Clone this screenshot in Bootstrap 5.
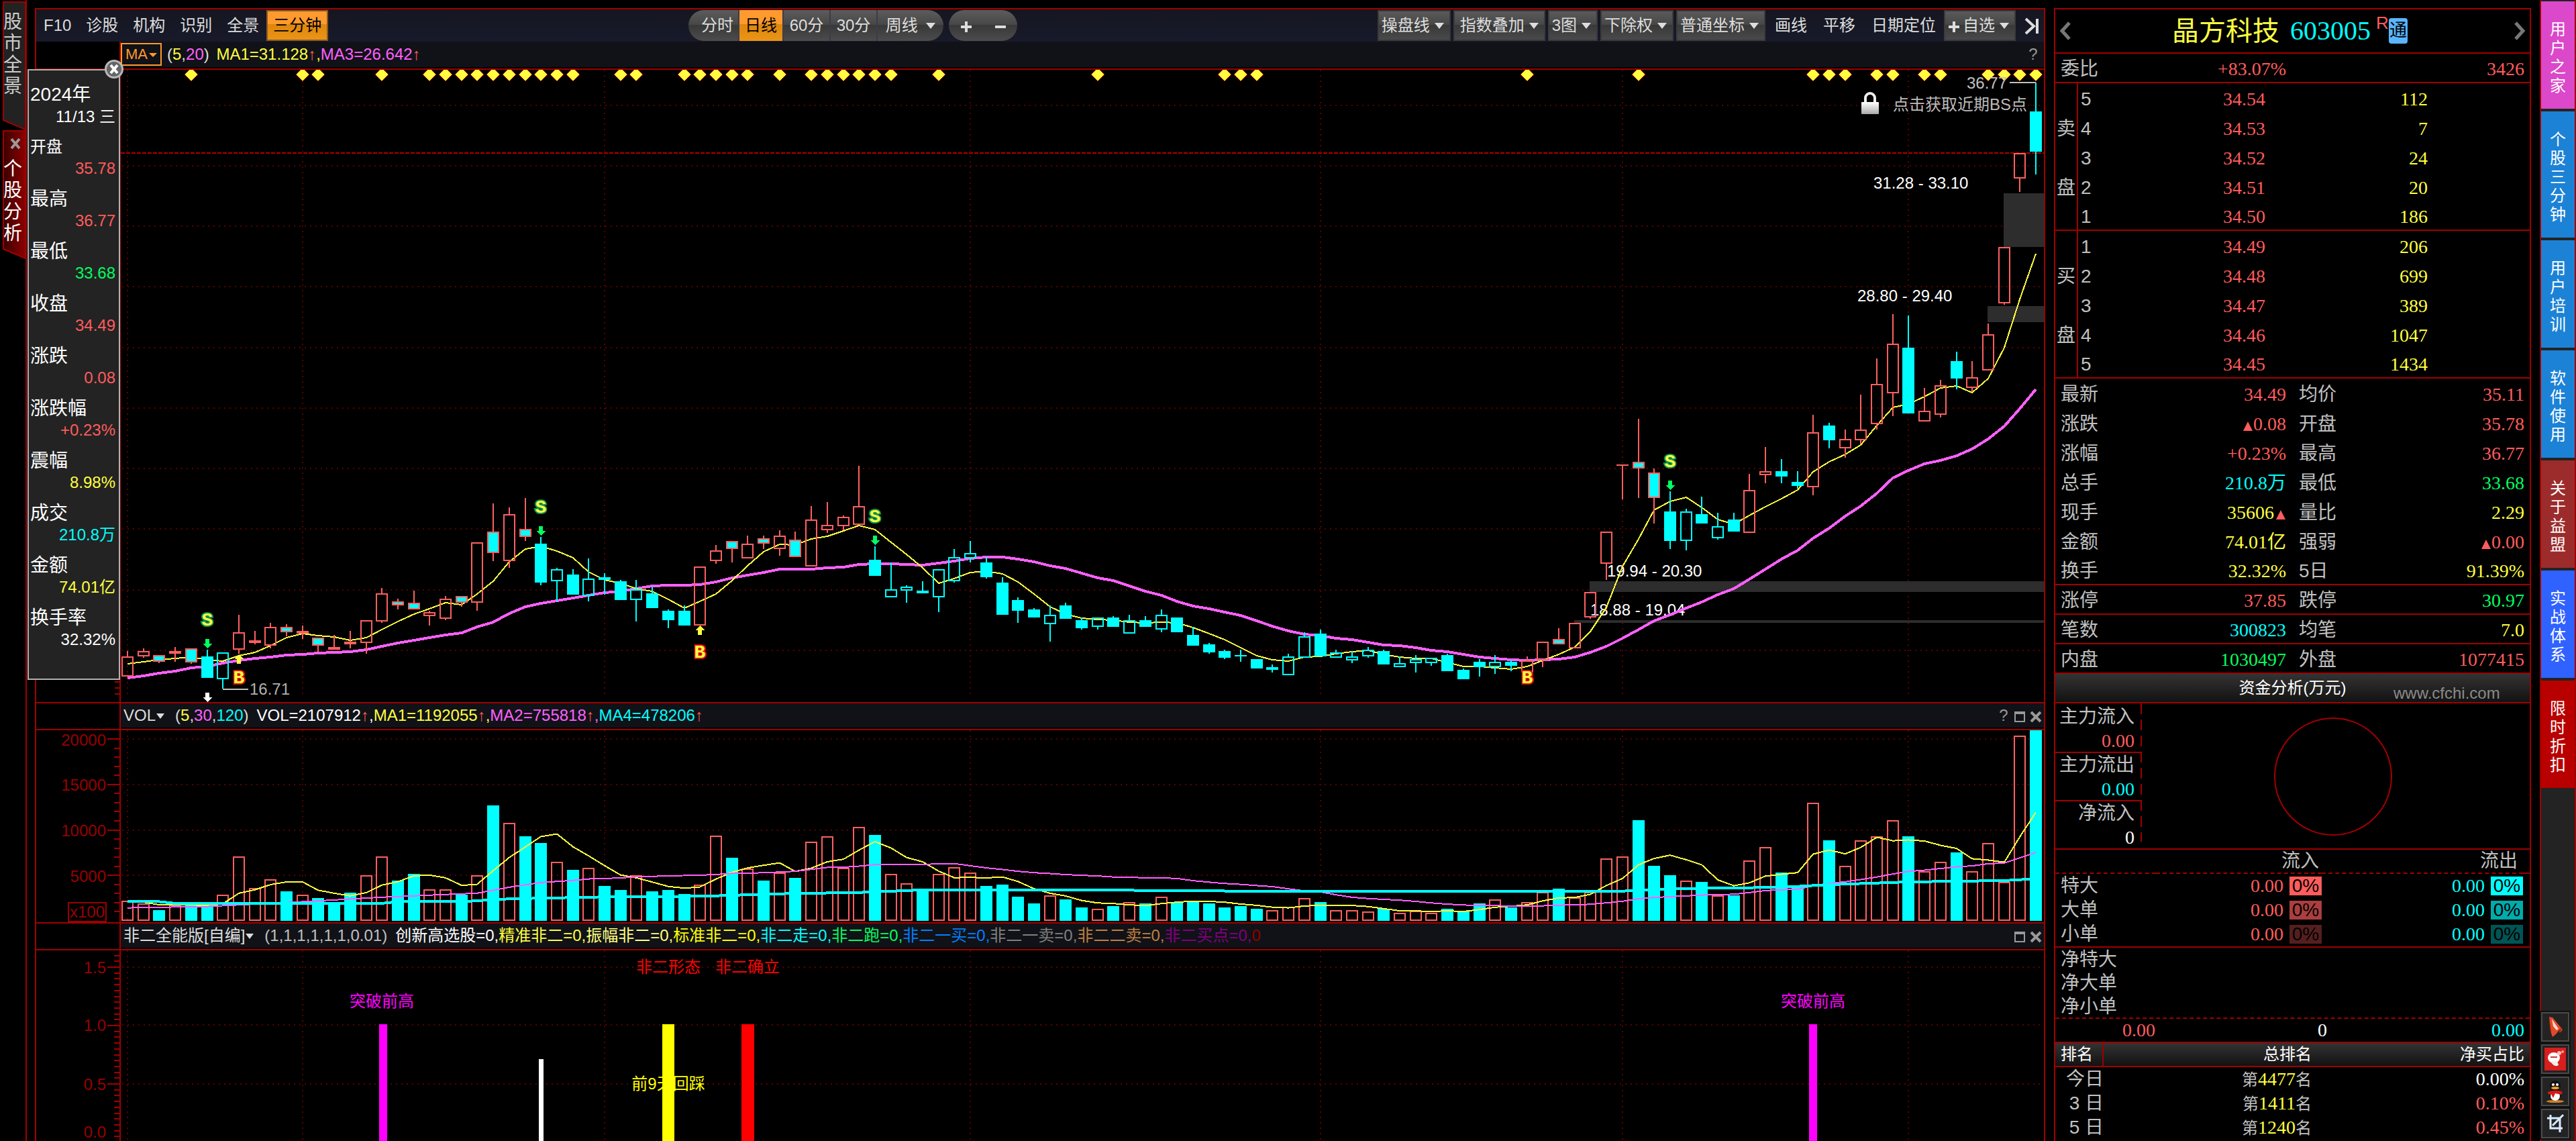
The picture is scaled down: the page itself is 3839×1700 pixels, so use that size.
<!DOCTYPE html>
<html lang="zh-CN">
<head>
<meta charset="utf-8">
<meta name="viewport" content="width=device-width, initial-scale=1">
<title>晶方科技 603005</title>
<link rel="stylesheet" href="https://cdn.jsdelivr.net/npm/bootstrap@5.3.0/dist/css/bootstrap.min.css">
<style>
:root{--ln:#a00000;--up:#ff5c5c;--dn:#00ff60;--cy:#00ffff;--ye:#ffff40;--mg:#ff60ff;--lb:#c0c0c0;}
body{background:#000;color:#ddd;font-family:"Liberation Sans","Noto Sans CJK SC",sans-serif;font-size:24px;line-height:28px;overflow:hidden}
button,a{font:inherit;color:inherit}
.app{height:100vh}
.c-up{color:var(--up)}.c-dn{color:var(--dn)}.c-cy{color:var(--cy)}.c-ye{color:var(--ye)}.c-mg{color:var(--mg)}.c-wh{color:#fff}
/* left tabs */
.side-left{flex:0 0 40px;border-right:2px solid var(--ln);padding:2px 0 0 4px}
.side-tab{display:flex;flex-direction:column;align-items:flex-start;justify-content:flex-start;position:relative;height:192px;border:0;background:none;padding:15px 0 0;width:34px;font-size:28px;line-height:32px;color:#ccc}
.side-tab svg{position:absolute;left:0;top:0}
.side-tab span{position:relative;display:block;width:28px;height:32px;margin-left:1px}
.side-tab .close-room{height:27px}
.side-tab.on{color:#fff}
/* chart frame */
.frame{margin:12px 0 0 12px;border:2px solid var(--ln);border-bottom:0;min-width:0}
.tool-row{height:48px;background:linear-gradient(#15161f,#181a2b)}
.tool-left{flex:0 0 972px}
.tool-link{background:none;border:0;padding:0 11px;white-space:nowrap}
.tool-right .tool-link{padding:0 12px}
.hot{background:linear-gradient(#ff9a2e 0,#ff9a2e 45%,#de860b 45%,#ea9418);color:#000;border:2px solid #8a5a20;height:46px;padding:0 8px;white-space:nowrap}
.pill{height:46px;background:linear-gradient(#5c5c5c,#474747 48%,#383838 48%,#4c4c4c);border-radius:23px;overflow:hidden}
.pill button{background:none;border:0;border-right:2px solid #3c3c48;padding:0;width:70px;white-space:nowrap}
.pill button:first-child{width:76px;padding-left:12px}
.pill button:last-child{border:0;width:98px}
.pill .hot{background:linear-gradient(#ff9a2e 0,#ff9a2e 45%,#de860b 45%,#ea9418);height:46px;width:66px}
.pill.zoomer{width:102px}
.pill.zoomer button{width:51px;border:0;padding:0 4px}
.drop{height:46px;border:2px solid #3a3a3c;background:linear-gradient(#5a5a5a,#474747 48%,#383838 48%,#4a4a4a);padding:0 8px 0 4px;white-space:nowrap}
.drop-set{margin-right:2px}
.caret{display:inline-block;border:7px solid transparent;border-top:9px solid #ddd;border-bottom:0;vertical-align:3px;margin-left:6px}
.drop .caret{margin-left:7px}
.gut{flex:0 0 126px;border-right:2px solid var(--ln)}
.pane-head{height:42px;border-bottom:2px solid var(--ln)}
.pane-head.mid{border-top:2px solid var(--ln)}
.head-bar{background:#111217;white-space:pre;border-bottom:2px solid #000;min-width:0;overflow:hidden}
.ma-btn{height:34px;border:2px solid #ff9a2e;background:none;color:#ff9a2e;font-size:22px;padding:0 5px;line-height:28px}
.ma-btn .caret{border-width:6px;border-top:6px solid #ff9a2e;border-bottom:0;margin-left:2px}
.head-btn{border:0;background:none;padding:0}
.head-btn .caret{margin-left:1px;border-width:6px;border-top-width:8px;border-bottom:0}
.win-btn{border:0;background:none;padding:0;color:#999;width:24px;line-height:24px}
.plot{display:block;width:100%}
.plot text{font-size:24px;dominant-baseline:central}
/* day card */
.day-card{left:-13px;top:89px;width:138px;height:910px;background:#232323;border:2px solid #b0b0b0;color:#fff;padding:22px 5px 0 2px}
.day-card .yr{font-size:28px;line-height:28px}
.day-card .dt{line-height:38px;margin-bottom:8px;text-align:right}
.day-card dl{margin:0}
.day-card dt{font-weight:400;font-size:28px;line-height:36px}
.day-card dt:first-child{font-size:24px}
.day-card dd{text-align:right;line-height:28px;margin:0 0 14px}
.day-close{position:absolute;right:-8px;top:-17px;width:30px;height:30px;border:0;padding:0;background:none;line-height:0}
/* quote panel */
.quote{flex:0 0 711px;margin:12px 13px 0;border:2px solid var(--ln);border-bottom:0;color:var(--lb);font-size:28px}
.quote table{width:100%;table-layout:fixed;border-collapse:separate;border-spacing:0}
.quote td,.quote th{padding:4px 0 0;font-weight:400;line-height:40px;height:44px;white-space:nowrap}
.quote .n{font-family:"Liberation Serif","Noto Sans CJK SC",serif;text-align:right}
.q-title{height:66px;border-bottom:2px solid var(--ln)}
.q-title .nm{font-size:40px;color:var(--ye)}
.q-title .code{font-size:40px;color:var(--cy);font-family:"Liberation Serif",serif}
.q-title .tong{background:#5ab4ff;color:#000;font-size:26px;width:28px;height:38px;line-height:36px;border-radius:4px;text-align:center}
.nav-arrow{background:none;border:0;padding:0 6px;line-height:0}
.quote .wb>*{border-bottom:2px solid var(--ln);line-height:38px}
.book .sd{border-right:2px solid var(--ln);text-align:center}
.quote .book tr:last-child>*{border-bottom:2px solid var(--ln);line-height:38px}
.quote .book td:nth-child(2){padding-left:4px}
.quote .facts th{padding-left:8px;text-align:left}
.quote .facts td+th{padding-left:19px}
.quote .facts td:last-child{padding-right:8px}
.quote .facts .rule>*{border-bottom:2px solid var(--ln);line-height:38px}
.facts svg{vertical-align:-1px}
.bar-head{background:linear-gradient(#333,#121212);color:#fff;font-size:24px;border-bottom:2px solid var(--ln)}
.fund-head{height:44px;line-height:42px;text-align:center;position:relative}
.wmark{position:absolute;left:504px;top:8px;color:#8a8a8a;font-family:"Liberation Sans",sans-serif}
.fund{height:218px;border-bottom:2px solid var(--ln)}
.fund-l{flex:0 0 129px;text-align:right;line-height:36px;background:repeating-linear-gradient(var(--ln) 0 16px,transparent 16px 24px) right top/2px 206px no-repeat}
.fund-l div{height:72px;padding-right:9px;border-bottom:2px solid var(--ln);margin-right:2px}
.fund-l div:first-child{height:74px;padding-top:2px}
.fund-l div:last-child{border:0}
.quote .flow td,.quote .flow th,.quote .rank td{height:36px;line-height:34px;padding-top:0}
.quote .flow thead>tr>th{border-bottom:2px dashed var(--ln)}
.quote .flow th:first-child{padding-left:8px;text-align:left}
.flow .pc{display:inline-block;width:48px;height:28px;line-height:28px;text-align:center;font-family:"Liberation Sans",sans-serif;color:#000;margin:3px 0 0 9px;vertical-align:top}
.nets{height:108px;line-height:36px;padding-left:8px;border-top:2px solid var(--ln);border-bottom:2px dashed var(--ln)}
.nets div{height:35px}
.sums{height:36px;line-height:34px;border-bottom:2px solid var(--ln)}
.quote .rank th{height:36px;line-height:32px;padding-top:0;background:linear-gradient(#333,#121212);color:#fff;font-size:24px;border-bottom:2px solid var(--ln)}
.rank small{font-size:24px;color:var(--lb)}
/* right tabs */
.side-right{flex:0 0 54px;border-left:2px solid var(--ln);border-right:2px solid var(--ln);background:#232323;padding-top:2px}
.r-tab{box-sizing:border-box;height:160px;margin-bottom:4px;color:#fff;text-decoration:none;font-size:24px;line-height:28px;width:50px;text-align:center;padding:28px 13px 0}
.r-tab:hover{color:#fff}
.r-tab.tall{height:188px}
.icon-btn{width:42px;height:44px;margin-bottom:4px;border:2px solid #4a4a4a;outline:2px solid #111;background:#232323;padding:0;line-height:0}
</style>
<script src="https://cdn.jsdelivr.net/npm/bootstrap@5.3.0/dist/js/bootstrap.bundle.min.js"></script>
</head>
<body>
<div class="app d-flex">
  <nav class="side-left">
    <button class="side-tab"><svg width="34" height="192"><path d="M1 1H34V191L1 177Z" fill="#222" stroke="#a00000" stroke-width="2"/></svg><span>股</span><span>市</span><span>全</span><span>景</span></button>
    <button class="side-tab on"><svg width="34" height="192"><defs><linearGradient id="gr" x1="0" x2="1"><stop offset="0" stop-color="#3c0000"/><stop offset="1" stop-color="#8c0000"/></linearGradient></defs><path d="M1 1H34V191L1 177Z" fill="url(#gr)" stroke="#a00000" stroke-width="2"/><path d="M13 13l12 14M25 13L13 27" stroke="#999" stroke-width="4"/></svg><span class="close-room"></span><span>个</span><span>股</span><span>分</span><span>析</span></button>
  </nav>

  <main class="frame flex-grow-1 d-flex flex-column position-relative">
    <div class="tool-row d-flex align-items-center flex-shrink-0">
      <div class="tool-left d-flex align-items-center">
        <button class="tool-link">F10</button><button class="tool-link">诊股</button><button class="tool-link">机构</button><button class="tool-link">识别</button><button class="tool-link">全景</button><button class="hot">三分钟</button>
      </div>
      <div class="pill d-flex"><button>分时</button><button class="hot">日线</button><button>60分</button><button>30分</button><button>周线 <i class="caret"></i></button></div>
      <div class="pill zoomer d-flex ms-2"><button aria-label="放大"><svg width="18" height="18"><path d="M9 1V17M1 9H17" stroke="#ddd" stroke-width="4"/></svg></button><button aria-label="缩小"><svg width="18" height="18"><path d="M1 9H17" stroke="#ddd" stroke-width="4"/></svg></button></div>
      <div class="tool-right ms-auto d-flex align-items-center">
        <div class="drop-set d-flex gap-1">
          <button class="drop">操盘线<i class="caret"></i></button>
          <button class="drop ps-2">指数叠加<i class="caret"></i></button>
          <button class="drop">3图<i class="caret"></i></button>
          <button class="drop">下除权<i class="caret"></i></button>
          <button class="drop">普通坐标<i class="caret"></i></button>
        </div>
        <button class="tool-link">画线</button><button class="tool-link">平移</button><button class="tool-link">日期定位</button>
        <button class="drop"><svg width="18" height="18" class="me-1"><path d="M9 1V17M1 9H17" stroke="#ddd" stroke-width="4"/></svg>自选<i class="caret"></i></button>
        <button class="tool-link pe-1" aria-label="折叠"><svg width="26" height="26"><path d="M3 2L15 13L3 24" fill="none" stroke="#ddd" stroke-width="4"/><path d="M20 2V24" stroke="#ddd" stroke-width="4"/></svg></button>
      </div>
    </div>
    <div class="pane-head d-flex flex-shrink-0">
      <div class="gut"></div>
      <div class="head-bar flex-grow-1 d-flex align-items-center"><button class="ma-btn">MA<i class="caret"></i></button><span class="ps-2">(<span class="c-ye">5</span>,<span class="c-mg">20</span>) </span><span class="c-ye ps-1">MA1=31.128<span class="c-up">↑</span>,</span><span class="c-mg">MA3=26.642<span class="c-up">↑</span></span><button class="win-btn ms-auto me-1">?</button></div>
    </div>
    <svg class="plot flex-shrink-0" id="kline" height="942"></svg>
    <div class="pane-head mid d-flex flex-shrink-0">
      <div class="gut"></div>
      <div class="head-bar flex-grow-1 d-flex align-items-center"><button class="head-btn ps-1">VOL<i class="caret"></i></button><span class="ps-3">(<span class="c-ye">5</span>,<span class="c-mg">30</span>,<span class="c-cy">120</span>)</span><span class="c-wh ps-2 ms-1">VOL=2107912<span class="c-up">↑</span>,</span><span class="c-ye">MA1=1192055<span class="c-up">↑</span>,</span><span class="c-mg">MA2=755818<span class="c-up">↑</span>,</span><span class="c-cy">MA4=478206<span class="c-up">↑</span></span>
      <span class="ms-auto d-flex"><button class="win-btn">?</button><button class="win-btn" aria-label="最大化"><svg width="18" height="18"><path d="M2 2H16V16H2Z" fill="none" stroke="#999" stroke-width="2"/><path d="M1 3H17" stroke="#999" stroke-width="4"/></svg></button><button class="win-btn" aria-label="关闭"><svg width="18" height="18"><path d="M2 2L16 16M16 2L2 16" stroke="#999" stroke-width="4"/></svg></button></span></div>
    </div>
    <svg class="plot flex-shrink-0" id="volume" height="286"></svg>
    <div class="pane-head mid d-flex flex-shrink-0">
      <div class="gut"></div>
      <div class="head-bar flex-grow-1 d-flex align-items-center"><button class="head-btn ps-1">非二全能版[自编]<i class="caret"></i></button><span class="ps-3" style="color:var(--lb)">(1,1,1,1,1,1,0.01)</span><span class="c-wh ps-2 ms-1">创新高选股=0,</span><span class="c-ye">精准非二=0,</span><span style="color:#ffff80">振幅非二=0,</span><span style="color:#ff0">标准非二=0,</span><span class="c-cy">非二走=0,</span><span class="c-dn">非二跑=0,</span><span style="color:#0080ff">非二一买=0,</span><span style="color:#808080">非二一卖=0,</span><span style="color:#c08040">非二二卖=0,</span><span style="color:#800080">非二买点=0,</span><span style="color:#900000">0</span>
      <span class="ms-auto d-flex"><button class="win-btn" aria-label="最大化"><svg width="18" height="18"><path d="M2 2H16V16H2Z" fill="none" stroke="#999" stroke-width="2"/><path d="M1 3H17" stroke="#999" stroke-width="4"/></svg></button><button class="win-btn" aria-label="关闭"><svg width="18" height="18"><path d="M2 2L16 16M16 2L2 16" stroke="#999" stroke-width="4"/></svg></button></span></div>
    </div>
    <svg class="plot flex-shrink-0" id="signal" height="284"></svg>

    <aside class="day-card position-absolute">
      <button class="day-close" aria-label="关闭"><svg width="30" height="30"><circle cx="15" cy="15" r="12.5" fill="#666" stroke="#b8b8b8" stroke-width="3"/><path d="M10 9L20 21M20 9L10 21" stroke="#fff" stroke-width="4"/></svg></button>
      <div class="yr">2024年</div><div class="dt">11/13 三</div>
      <dl>
        <dt>开盘</dt><dd class="c-up">35.78</dd>
        <dt>最高</dt><dd class="c-up">36.77</dd>
        <dt>最低</dt><dd class="c-dn">33.68</dd>
        <dt>收盘</dt><dd class="c-up">34.49</dd>
        <dt>涨跌</dt><dd class="c-up">0.08</dd>
        <dt>涨跌幅</dt><dd class="c-up">+0.23%</dd>
        <dt>震幅</dt><dd class="c-ye">8.98%</dd>
        <dt>成交</dt><dd class="c-cy">210.8万</dd>
        <dt>金额</dt><dd class="c-ye">74.01亿</dd>
        <dt>换手率</dt><dd>32.32%</dd>
      </dl>
    </aside>
  </main>

  <section class="quote">
    <div class="q-title d-flex align-items-center justify-content-between">
      <button class="nav-arrow" aria-label="上一只"><svg width="20" height="28"><path d="M15 2L4 14L15 26" fill="none" stroke="#777" stroke-width="5"/></svg></button>
      <div class="d-flex align-items-center pe-2"><span class="nm">晶方科技</span><span class="code ms-3">603005</span><span class="c-up ms-2 pb-4" style="font-size:26px">R</span><span class="tong">通</span></div>
      <button class="nav-arrow" aria-label="下一只"><svg width="20" height="28"><path d="M5 2L16 14L5 26" fill="none" stroke="#777" stroke-width="5"/></svg></button>
    </div>
    <table><colgroup><col style="width:150px"><col style="width:194px"><col></colgroup>
      <tr class="wb"><td class="ps-2">委比</td><td class="n c-up">+83.07%</td><td class="n c-up pe-2">3426</td></tr></table>
    <table class="book"><colgroup><col style="width:34px"><col style="width:98px"><col style="width:181px"><col style="width:242px"><col></colgroup>
      <tbody>
      <tr><th class="sd"></th><td>5</td><td class="n c-up">34.54</td><td class="n c-ye">112</td><td></td></tr>
      <tr><th class="sd">卖</th><td>4</td><td class="n c-up">34.53</td><td class="n c-ye">7</td><td></td></tr>
      <tr><th class="sd"></th><td>3</td><td class="n c-up">34.52</td><td class="n c-ye">24</td><td></td></tr>
      <tr><th class="sd">盘</th><td>2</td><td class="n c-up">34.51</td><td class="n c-ye">20</td><td></td></tr>
      <tr><th class="sd"></th><td>1</td><td class="n c-up">34.50</td><td class="n c-ye">186</td><td></td></tr>
      </tbody><tbody>
      <tr><th class="sd"></th><td>1</td><td class="n c-up">34.49</td><td class="n c-ye">206</td><td></td></tr>
      <tr><th class="sd">买</th><td>2</td><td class="n c-up">34.48</td><td class="n c-ye">699</td><td></td></tr>
      <tr><th class="sd"></th><td>3</td><td class="n c-up">34.47</td><td class="n c-ye">389</td><td></td></tr>
      <tr><th class="sd">盘</th><td>4</td><td class="n c-up">34.46</td><td class="n c-ye">1047</td><td></td></tr>
      <tr><th class="sd"></th><td>5</td><td class="n c-up">34.45</td><td class="n c-ye">1434</td><td></td></tr>
      </tbody></table>
    <table class="facts"><colgroup><col style="width:150px"><col style="width:194px"><col style="width:150px"><col></colgroup>
      <tr><th>最新</th><td class="n c-up">34.49</td><th>均价</th><td class="n c-up">35.11</td></tr>
      <tr><th>涨跌</th><td class="n c-up"><svg width="16" height="14"><path d="M1 14L8 0L15 14Z" fill="#ff5c5c"/></svg>0.08</td><th>开盘</th><td class="n c-up">35.78</td></tr>
      <tr><th>涨幅</th><td class="n c-up">+0.23%</td><th>最高</th><td class="n c-up">36.77</td></tr>
      <tr><th>总手</th><td class="n c-cy">210.8万</td><th>最低</th><td class="n c-dn">33.68</td></tr>
      <tr><th>现手</th><td class="n c-ye">35606<svg width="18" height="14"><path d="M3 14L10 0L17 14Z" fill="#ff5c5c"/></svg></td><th>量比</th><td class="n c-ye">2.29</td></tr>
      <tr><th>金额</th><td class="n c-ye">74.01亿</td><th>强弱</th><td class="n c-up"><svg width="16" height="14"><path d="M1 14L8 0L15 14Z" fill="#ff5c5c"/></svg>0.00</td></tr>
      <tr class="rule"><th>换手</th><td class="n c-ye">32.32%</td><th>5日</th><td class="n c-ye">91.39%</td></tr>
      <tr class="rule"><th>涨停</th><td class="n c-up">37.85</td><th>跌停</th><td class="n c-dn">30.97</td></tr>
      <tr class="rule"><th>笔数</th><td class="n c-cy">300823</td><th>均笔</th><td class="n c-ye">7.0</td></tr>
      <tr class="rule"><th>内盘</th><td class="n c-dn">1030497</td><th>外盘</th><td class="n c-up">1077415</td></tr>
    </table>
    <div class="bar-head fund-head">资金分析(万元)<span class="wmark">www.cfchi.com</span></div>
    <div class="fund d-flex">
      <div class="fund-l"><div>主力流入<br><span class="n c-up">0.00</span></div><div>主力流出<br><span class="n c-cy">0.00</span></div><div>净流入<br><span class="n c-wh">0</span></div></div>
      <div class="flex-grow-1 text-center pe-2"><svg width="176" height="176" style="margin-top:21px"><circle cx="88" cy="88" r="87" fill="none" stroke="#a00000" stroke-width="2"/></svg></div>
    </div>
    <table class="flow"><colgroup><col style="width:150px"><col style="width:247px"><col style="width:300px"><col></colgroup>
      <thead><tr><th></th><th class="text-end pe-1">流入</th><th class="text-end pe-2">流出</th><th></th></tr></thead>
      <tbody>
      <tr><th>特大</th><td class="n c-up">0.00<span class="pc" style="background:#ff5c5c">0%</span></td><td class="n c-cy">0.00<span class="pc" style="background:#00ffff">0%</span></td><td></td></tr>
      <tr><th>大单</th><td class="n c-up">0.00<span class="pc" style="background:#ab3e3e">0%</span></td><td class="n c-cy">0.00<span class="pc" style="background:#00abab">0%</span></td><td></td></tr>
      <tr><th>小单</th><td class="n c-up">0.00<span class="pc" style="background:#551f1f">0%</span></td><td class="n c-cy">0.00<span class="pc" style="background:#005555">0%</span></td><td></td></tr>
      </tbody></table>
    <div class="nets"><div>净特大</div><div>净大单</div><div>净小单</div></div>
    <div class="sums d-flex"><span class="n c-up" style="width:149px">0.00</span><span class="n c-wh" style="width:256px">0</span><span class="n c-cy ms-auto pe-2">0.00</span></div>
    <table class="rank"><colgroup><col style="width:72px"><col style="width:310px"><col></colgroup>
      <thead><tr><th class="ps-2" style="border-right:2px solid var(--ln)">排名</th><th class="text-end">总排名</th><th class="text-end pe-2">净买占比</th></tr></thead>
      <tbody>
      <tr><td class="text-end">今日</td><td class="n c-ye"><small>第</small>4477<small>名</small></td><td class="n c-wh pe-2">0.00%</td></tr>
      <tr><td class="text-end">3 日</td><td class="n c-ye"><small>第</small>1411<small>名</small></td><td class="n c-up pe-2">0.10%</td></tr>
      <tr><td class="text-end">5 日</td><td class="n c-ye"><small>第</small>1240<small>名</small></td><td class="n c-up pe-2">0.45%</td></tr>
      </tbody></table>
  </section>

  <nav class="side-right d-flex flex-column">
    <a href="#" class="r-tab" style="background:#db48ca">用户之家</a>
    <a href="#" class="r-tab tall" style="background:#1c82d6">个股三分钟</a>
    <a href="#" class="r-tab" style="background:#1c82d6">用户培训</a>
    <a href="#" class="r-tab" style="background:#1c82d6">软件使用</a>
    <a href="#" class="r-tab" style="background:#9c2c2c">关于益盟</a>
    <a href="#" class="r-tab" style="background:#2f62ff">实战体系</a>
    <a href="#" class="r-tab" style="background:#b80000">限时折扣</a>
    <div class="mt-auto d-flex flex-column">
      <button class="icon-btn" aria-label="画笔"><svg width="30" height="34" viewBox="0 0 30 34"><path d="M6 2L11 3L26 21L23 25L20 23L16 28L11 32L8 24Z" fill="#e04a2a"/><path d="M10 5L20 20L17 22L12 16Z" fill="#ffd8c8"/><path d="M6 3L10 31L7 20Z" fill="#a01a08"/><path d="M19 23L25 18L22 26Z" fill="#a02010"/></svg></button>
      <button class="icon-btn" aria-label="消息"><svg width="32" height="34" viewBox="0 0 32 34"><rect width="32" height="34" fill="#d81e1e"/><ellipse cx="14" cy="15" rx="9" ry="8" fill="#fff"/><path d="M9 20Q14 30 21 26L19 20Z" fill="#eee"/><path d="M9 14H19" stroke="#c33" stroke-width="2"/><circle cx="22" cy="8" r="3" fill="#fbb"/><circle cx="27" cy="6" r="2" fill="#f99"/></svg></button>
      <button class="icon-btn" aria-label="QQ客服"><svg width="30" height="34" viewBox="0 0 30 34"><ellipse cx="15" cy="32" rx="13" ry="2" fill="#d08020"/><ellipse cx="15" cy="22" rx="9" ry="9" fill="#111"/><ellipse cx="15" cy="24" rx="7" ry="7" fill="#fff"/><ellipse cx="15" cy="9" rx="8" ry="8" fill="#111"/><circle cx="12" cy="7" r="2" fill="#fff"/><circle cx="18" cy="7" r="2" fill="#fff"/><ellipse cx="15" cy="12" rx="6" ry="2" fill="#f0a020"/><path d="M4 18Q15 13 26 18L24 22L15 20L12 27L9 21L5 22Z" fill="#d81818"/></svg></button>
      <button class="icon-btn" aria-label="截图"><svg width="30" height="30" viewBox="0 0 30 30"><path d="M8 2V22H26M3 7H22V28M11 18L27 2" fill="none" stroke="#d8ecff" stroke-width="3"/></svg></button>
    </div>
  </nav>
</div>
<script>
/* wick top, body top, body bottom, wick bottom, style
   r hollow red, c solid cyan, h hollow cyan, m cyan with red edge, x flat red */
const K=`970 978 1008 1008 r|966 970 978 980 r|976 976 986 988 m|964 970 974 986 x|966 966 987 989 m|968 978 1010 1010 c|972 972 1012 1026 h|916 942 968 974 r|940 954 958 960 x|928 934 962 966 r|930 934 942 948 m|932 940 944 952 x|950 950 962 971 m|946 964 968 968 x|940 956 960 966 x|924 924 958 974 r|876 884 926 928 r|892 896 902 908 m|880 898 908 908 m|910 912 918 932 r|888 892 922 924 r|888 888 898 904 m|808 808 898 910 r|750 792 824 836 m|756 766 836 846 r|742 788 800 806 m|800 810 868 872 c|846 848 866 896 h|848 856 886 886 c|832 862 888 896 h|854 860 864 886 c|864 866 894 894 c|864 878 894 926 h|874 884 906 906 c|908 910 924 936 c|902 910 932 932 c|844 844 932 932 r|812 820 836 840 r|806 806 818 838 m|798 810 832 832 r|798 802 810 818 m|790 798 818 828 r|792 804 830 830 m|754 774 844 844 r|748 782 790 794 r|768 770 784 790 r|694 754 782 782 r|814 834 858 858 c|838 878 890 890 h|872 874 880 898 h|866 880 884 884 c|848 848 890 912 h|818 830 866 868 h|806 824 832 838 h|830 838 860 862 c|860 868 916 916 c|890 894 910 928 c|906 908 920 920 c|902 916 930 956 h|898 902 922 922 c|920 924 936 938 c|920 920 934 938 h|918 920 934 934 c|916 924 944 944 h|918 924 934 934 c|908 916 938 942 h|920 920 942 942 c|934 946 962 962 c|958 960 972 974 c|968 970 980 982 c|968 976 978 986 c|982 982 996 996 c|990 994 998 1002 c|974 978 1006 1006 h|942 948 980 980 h|938 944 978 978 c|968 972 980 980 h|970 978 984 988 h|964 968 978 980 h|968 970 990 990 c|978 988 994 994 h|976 982 988 1002 h|980 980 988 992 h|974 976 1000 1000 c|996 998 1012 1012 c|982 986 994 1008 c|976 986 994 1004 h|984 986 992 1000 c|978 984 1002 1002 r|956 956 984 994 r|936 952 960 960 m|928 928 966 966 r|882 882 920 922 r|792 792 840 864 r|692 692 694 744 x|624 688 698 742 m|698 704 742 780 m|732 762 806 818 c|758 762 806 820 h|740 766 780 780 c|764 784 802 804 h|764 774 792 792 c|706 730 794 794 r|666 702 708 720 r|684 702 710 720 c|702 718 724 728 c|618 644 726 738 r|630 634 656 668 c|640 654 668 682 r|588 640 656 662 r|534 572 632 640 r|468 512 586 620 r|470 518 616 616 c|578 612 628 628 r|566 574 618 622 r|524 538 564 580 c|538 562 578 584 r|482 498 552 552 r|368 368 452 454 r|228 228 266 286 r|123 166 226 260 c`.split('|').map(s=>{const a=s.split(' ');return [+a[0],+a[1],+a[2],+a[3],a[4]]});
const MA5=[989,986,983,981,979,983,985,977,972,962,950,944,947,949,954,950,938,926,915,907,898,901,885,866,837,818,814,821,831,852,864,869,877,881,893,906,896,885,865,843,822,811,812,803,799,791,783,789,808,826,846,869,862,853,851,855,867,885,904,915,921,923,924,927,928,927,928,935,944,953,965,977,983,985,979,978,974,971,969,975,979,981,981,987,993,993,995,997,993,984,975,964,941,905,844,803,760,747,741,756,774,781,768,755,743,730,703,688,677,663,634,607,602,591,578,575,585,564,518,446,378];
const MA20=[1010,1007,1003,1000,995,993,988,984,981,979,976,975,973,972,971,968,963,958,954,950,946,943,934,927,914,904,899,895,891,887,883,881,877,873,872,872,871,867,861,857,853,848,848,848,846,845,841,840,840,841,842,839,836,832,830,830,833,837,843,847,854,861,865,873,881,887,896,903,907,912,917,925,933,940,945,947,951,953,957,961,962,965,969,971,975,979,981,983,984,983,982,979,972,963,951,938,925,916,906,897,886,877,863,848,833,820,802,787,769,754,735,712,701,691,686,679,669,654,635,609,580];
const V=[2200,1900,1200,1750,1750,1750,2900,7050,3650,4550,3250,2900,2500,2000,3100,5000,7050,4400,5200,3500,3500,2900,5000,12700,10750,9300,8550,6500,5600,5850,3850,3400,5000,3250,3400,2950,4000,9400,6950,5750,4450,5350,4700,8700,9300,5850,10300,9450,5150,4100,3470,5150,5880,5290,3840,3980,2650,1920,2780,2360,1480,1300,1620,2040,1920,2630,2070,2160,1920,1480,1620,1330,1160,1570,2480,2070,1160,1160,1000,1330,860,1100,860,1330,1000,1920,2340,1480,2040,3200,3540,2600,3200,6900,7060,11070,6050,5020,4400,4280,2800,2800,6620,8090,5310,3690,12960,8860,6030,8830,9270,11050,9300,5440,6470,7530,5440,8540,4260,20340,21079];
/* one letter per volume bar, ten bars per group */
const VC='rrcrccrrrr crcccrrccr rcrcrccrcr ccrcccrrcr crcrrrrcrr crrrccccrc crcrcrcccc ccrrrcrrrc rrrcccrcrr crrrrcccrc rcrrccrcrr rrcrrcrrrr c'.replace(/ /g,'');
const RED='#ff6060',CY='#00ffff',LN='#a00000',GR='#5c0000',YE='#ffff40',MG='#ff60ff',AX='#980000';
const N=121,AXX=124;
const rect=(x,y,w,h,f)=>`<rect x="${x}" y="${y}" width="${w}" height="${h}" fill="${f}"/>`;
const box=(x,y,w,h,s,f='none')=>`<rect x="${x+1}" y="${y+1}" width="${w-2}" height="${Math.max(0,h-2)}" fill="${f}" stroke="${s}" stroke-width="2"/>`;
const hl=(x1,x2,y,c,d='')=>`<path d="M${x1} ${y}H${x2}" stroke="${c}" stroke-width="2" stroke-dasharray="${d}"/>`;
const vl=(x,y1,y2,c,d='')=>`<path d="M${x} ${y1}V${y2}" stroke="${c}" stroke-width="2" stroke-dasharray="${d}"/>`;
const txt=(x,y,s,c,a='start',e='')=>`<text x="${x}" y="${y}" fill="${c}" text-anchor="${a}" ${e}>${s}</text>`;
const pl=(p,c,w)=>`<polyline points="${p.map(q=>q.join(',')).join(' ')}" fill="none" stroke="${c}" stroke-width="${w}"/>`;
const arrow=(x,y,c,up)=>`<path d="M-3 -7H3V0H7L0 7L-7 0H-3Z" fill="${c}" transform="translate(${x} ${y})${up?' scale(1 -1)':''}"/>`;
const COLS=[0,11,30,53,75,94,112];
function draw(){
  const el=id=>document.getElementById(id);
  const W=el('kline').clientWidth, P=(W-148)/(N-1), X=i=>Math.round(136+i*P);
  const frame=(id,y0,h,s)=>{const e=el(id);e.setAttribute('viewBox',`0 ${y0} ${W} ${h}`);e.innerHTML='<g shape-rendering="crispEdges">'+s+'</g>'};
  const grid=(y1,y2,ys)=>COLS.map(i=>vl(X(i),y1,y2,GR,'2 6')).join('')+ys.map(y=>hl(AXX+4,W,y,GR,'2 6')).join('');
  const axis=(y1,y2)=>rect(AXX,y1,2,y2-y1,LN);

  let s=grid(104,1040,[157,247,337,427,518,608,698,788,879,969])+axis(104,1046);
  s+=rect(X(118)-1,288,W,80,'#2d2d2d')+rect(X(117)-1,456,W,24,'#2d2d2d')+rect(X(92)-1,866,W,16,'#2d2d2d')+rect(X(91)-1,924,W,4,'#2d2d2d');
  s+=hl(AXX+2,W,228,'#b00000','6 2');
  [1015,1024,1033].forEach(y=>s+=rect(AXX-7,y,7,2,LN));
  s+=txt(X(109)+19,272,'31.28 - 33.10','#fff')+txt(X(108)+18,440,'28.80 - 29.40','#fff')+txt(X(93)+1,850,'19.94 - 20.30','#fff')+txt(X(92),908,'18.88 - 19.04','#fff');
  s+=pl(MA20.map((y,i)=>[X(i),y]),MG,4)+pl(MA5.map((y,i)=>[X(i),y]),YE,2);
  K.forEach(([h,t,b,l,k],i)=>{const x=X(i),c=(k=='c'||k=='h')?CY:RED;
    if(h<t)s+=rect(x-1,h,2,t-h,c); if(l>b)s+=rect(x-1,b,2,l-b,c);
    s+= k=='c'||k=='x' ? rect(x-9,t,18,b-t,c) : box(x-9,t,18,b-t,c,k=='m'?CY:'none');});
  [4,11,12,16,19,20,21,22,23,24,25,26,27,28,31,32,35,36,37,38,39,41,43,44,45,46,47,48,51,61,69,70,71,88,95,106,107,108,110,111,113,114,117,118,119,120].forEach(i=>{s+=`<path d="M${X(i)} 101L${X(i)+10} 111L${X(i)} 121L${X(i)-10} 111Z" fill="#ffff40" stroke="#b00000" stroke-width="1"/>`});
  s+=rect(X(118)+8,122,X(120)-X(118)-8,2,'#c0c0c0')+txt(X(118)+4,123,'36.77','#c0c0c0','end');
  s+=rect(X(6),1026,38,2,'#c0c0c0')+txt(X(6)+40,1026,'16.71','#b0b0b0');
  s+=txt(W-225,155,'点击获取近期BS点','#bbb');
  s+=`<g transform="translate(${W-272} 137)" shape-rendering="auto"><defs><linearGradient id="lk" y2="1" x2="0"><stop offset="0" stop-color="#fff"/><stop offset="1" stop-color="#aaa"/></linearGradient></defs><path d="M6 16V9a7 7 0 0 1 14 0V16" fill="none" stroke="#eee" stroke-width="4"/><rect x="0" y="15" width="26" height="18" rx="1" fill="url(#lk)"/></g>`;
  const mk=(i,y,ch)=>txt(X(i),y,ch,'#ffff40','middle',`style="font:700 28px 'Liberation Mono',monospace;paint-order:stroke" stroke="${ch=='S'?'#109050':'#e01010'}" stroke-width="4"`);
  [[5,924],[26,756],[47,770],[97,688]].forEach(([i,y])=>{s+=mk(i,y,'S')+arrow(X(i),y+35,'#00ff60')});
  s+=mk(7,1010,'B')+arrow(X(7),982,YE,1)+mk(36,972,'B')+arrow(X(36),939,YE,1)+mk(88,1010,'B')+arrow(X(5),1039,'#fff');
  frame('kline',104,942,s);

  const vy=v=>1372-v*0.01355, ys=[20000,15000,10000,5000];
  s=grid(1088,1374,ys.map(v=>Math.round(vy(v))))+axis(1088,1374);
  for(let v=1000;v<=20000;v+=1000){const m=v%5000==0;s+=rect(AXX-(m?18:8),Math.round(vy(v))-1,m?18:8,2,LN)}
  ys.forEach(v=>s+=txt(104,vy(v)+1,v,AX,'end'));
  s+=box(47,1344,58,30,AX)+txt(102,1358,'x100',AX,'end');
  V.forEach((v,i)=>{const t=Math.round(vy(v)),x=X(i);s+=VC[i]=='c'?rect(x-9,t,18,1372-t,CY):box(x-9,t,18,1372-t,RED)});
  const sma=n=>V.map((_,i)=>{let a=0,c=0;for(let j=Math.max(0,i-n+1);j<=i;j++){a+=V[j];c++}return a/c});
  const lerp=p=>V.map((_,i)=>{let k=0;while(k<p.length-2&&p[k+1][0]<=i)k++;const[a,b]=[p[k],p[k+1]];return a[1]+(b[1]-a[1])*(i-a[0])/(b[0]-a[0])});
  const m30=sma(30),early=lerp([[0,1430],[5,1580],[7,1750],[12,2200],[16,2600],[20,2900],[22,3040],[24,3700],[26,4220],[29,4560]]);
  const m120=lerp([[0,2110],[2,2110],[3,1925],[16,1925],[17,2110],[21,2110],[24,2420],[31,2670],[36,2700],[41,2980],[46,3120],[50,3400],[60,3400],[70,3270],[94,3270],[97,3540],[104,3690],[107,3980],[112,4280],[118,4430],[120,4620]]);
  s+=pl(sma(5).map((v,i)=>[X(i),vy(v)]),YE,2)+pl(m30.map((v,i)=>[X(i),vy(i<29?early[i]:v)]),MG,2)+pl(m120.map((v,i)=>[X(i),vy(v)]),CY,4);
  frame('volume',1088,286,s);

  s=grid(1416,1700,[1441,1527,1615])+axis(1416,1700);
  for(let k=-3;k<=30;k++){const y=Math.round(1441+k*8.7),m=k>=0&&k%10==0;if(y<1700)s+=rect(AXX-(m?18:8),y-1,m?18:8,2,LN)}
  [['1.5',1441],['1.0',1527],['0.5',1615],['0.0',1686]].forEach(a=>s+=txt(104,a[1],a[0],AX,'end'));
  const M='#ff00ff';
  s+=txt(X(34),1614,'前9天回踩','#ff0','middle');
  s+=rect(X(16)-4,1526,12,174,M)+rect(X(26)-3,1578,7,122,'#fff')+rect(X(34)-9,1526,18,174,'#ff0')+rect(X(39)-9,1526,19,174,'#f00')+rect(X(106)-6,1526,12,174,M);
  s+=txt(X(16),1491,'突破前高',M,'middle')+txt(X(34),1440,'非二形态','#f00','middle')+txt(X(39),1440,'非二确立','#f00','middle')+txt(X(106),1491,'突破前高',M,'middle');
  frame('signal',1416,284,s);
}
draw();addEventListener('resize',draw);
</script>
</body>
</html>
